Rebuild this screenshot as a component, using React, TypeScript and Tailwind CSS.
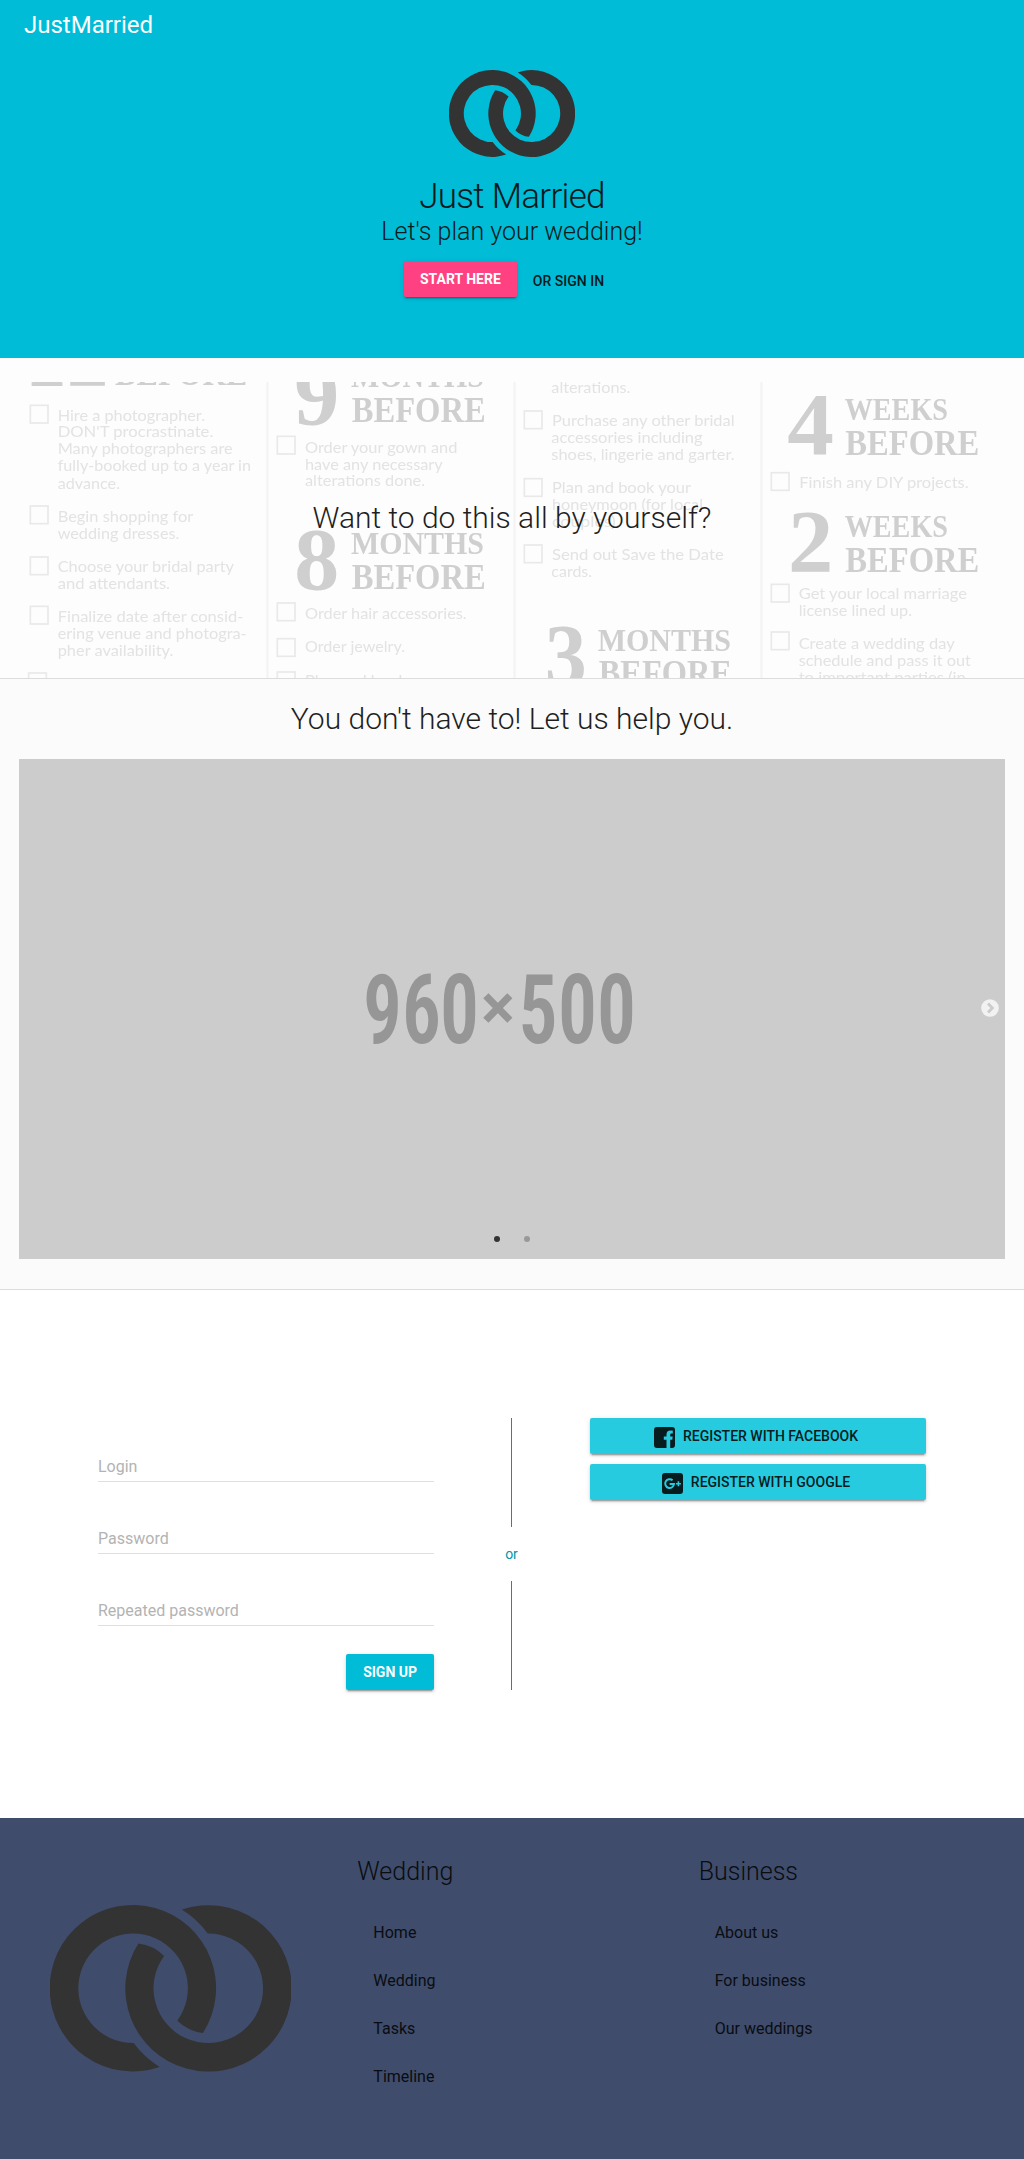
import type { ReactNode } from 'react';

function Rings({ className }: { className: string }) {
  const ring =
    'M109.6 162A83.2 83.2 0 1 1 153 128A45 45 0 0 1 127.3 115.7A54.8 54.8 0 1 0 83.6 138.1A92.6 92.6 0 0 0 109.6 162Z';
  return (
    <svg viewBox="0 0 241.4 166.6" className={className} fill="#333333" aria-hidden="true">
      <path d={ring} />
      <path d={ring} transform="rotate(180 120.7 83.3)" />
    </svg>
  );
}

type Line = [text: string, x: number, end: number, baseline: number];

// Checklist poster, laid out in units of a third of a pixel.
const items: Line[] = [
  ['Hire a photographer.', 173, 615, 212],
  ["DON'T procrastinate.", 173, 640, 262],
  ['Many photographers are', 173, 698, 312],
  ['fully-booked up to a year in', 173, 753, 363],
  ['advance.', 173, 360, 416],
  ['Begin shopping for', 173, 580, 516],
  ['wedding dresses.', 173, 538, 567],
  ['Choose your bridal party', 173, 702, 667],
  ['and attendants.', 173, 510, 717],
  ['Finalize date after consid-', 173, 730, 817],
  ['ering venue and photogra-', 173, 740, 868],
  ['pher availability.', 173, 520, 918],
  ['Begin registering for b', 173, 630, 1016],
  ['Order your gown and', 915, 1372, 308],
  ['have any necessary', 915, 1328, 360],
  ['alterations done.', 915, 1275, 409],
  ['Order hair accessories.', 915, 1400, 807],
  ['Order jewelry.', 915, 1215, 907],
  ['Plan and book your', 915, 1330, 1007],
  ['alterations.', 1654, 1891, 128],
  ['Purchase any other bridal', 1656, 2204, 228],
  ['accessories including', 1654, 2108, 279],
  ['shoes, lingerie and garter.', 1654, 2204, 329],
  ['Plan and book your', 1656, 2073, 430],
  ['honeymoon (for local', 1656, 2109, 480],
  ['couples).', 1656, 1860, 530],
  ['Send out Save the Date', 1656, 2171, 630],
  ['cards.', 1654, 1776, 680],
  ['Finish any DIY projects.', 2398, 2906, 415],
  ['Get your local marriage', 2396, 2901, 747],
  ['license lined up.', 2396, 2736, 797],
  ['Create a wedding day', 2396, 2864, 897],
  ['schedule and pass it out', 2396, 2913, 947],
  ['to important parties (in-', 2396, 2916, 998],
];

const small: Line[] = [
  ['MONTHS', 1053, 1452, 110],
  ['MONTHS', 1053, 1452, 612],
  ['MONTHS', 1793, 2193, 903],
  ['WEEKS', 2534, 2844, 211],
  ['WEEKS', 2534, 2844, 562],
];

const large: Line[] = [
  ['BEFORE', 345, 742, 106],
  ['BEFORE', 1055, 1457, 217],
  ['BEFORE', 1055, 1457, 718],
  ['BEFORE', 1796, 2196, 1005],
  ['BEFORE', 2536, 2938, 314],
  ['BEFORE', 2536, 2938, 665],
];

const digits: Line[] = [
  ['12', 75, 325, 106],
  ['9', 883, 1018, 222],
  ['8', 883, 1018, 716],
  ['3', 1634, 1760, 1004],
  ['4', 2362, 2502, 312],
  ['2', 2364, 2500, 662],
];

const boxes: [number, number][] = [
  [91, 166], [91, 468], [91, 621], [91, 769], [86, 969],
  [832, 259], [832, 759], [832, 866], [832, 966],
  [1573, 183], [1573, 386], [1573, 585],
  [2314, 368], [2314, 703], [2314, 846],
];

function Lines({ lines }: { lines: Line[] }) {
  return (
    <>
      {lines.map(([text, x, end, y]) => (
        <text key={`${text}${x}${y}`} x={x} y={y} textLength={end - x} lengthAdjust="spacingAndGlyphs">
          {text}
        </text>
      ))}
    </>
  );
}

function Checklist() {
  return (
    <svg viewBox="0 96 3072 888" className="absolute inset-x-0 bottom-0 h-[296px] w-full overflow-hidden blur-[0.6px]" aria-hidden="true">
      <g fill="#f4f4f4">
        <rect x="799" y="96" width="7" height="888" />
        <rect x="1540" y="96" width="7" height="888" />
        <rect x="2281" y="96" width="7" height="888" />
      </g>
      <g fill="none" stroke="#e9e9e9" strokeWidth="5">
        {boxes.map(([x, y]) => (
          <rect key={`${x}-${y}`} x={x} y={y} width="53" height="53" />
        ))}
      </g>
      <g className="font-['Lato']" fontSize="46" fill="#e3e3e3">
        <Lines lines={items} />
      </g>
      <g className="font-['Liberation_Serif'] font-bold" fill="#cfcfcf">
        <g fontSize="95"><Lines lines={small} /></g>
        <g fontSize="106"><Lines lines={large} /></g>
        <g fontSize="264"><Lines lines={digits} /></g>
      </g>
    </svg>
  );
}

const placeholder: [string, number, number][] = [
  ['9', -1, 39], ['6', 38, 39], ['0', 76, 39], ['5', 154.5, 39], ['0', 194, 39], ['0', 233, 39],
];

function Slide() {
  return (
    <div className="relative flex h-[500px] items-center justify-center bg-[#cccccc]">
      <svg viewBox="0 0 270 74" className="mr-[27px] h-[74px] w-[270px] overflow-visible" fill="#969696">
        <g className="font-['Roboto'] font-semibold [font-stretch:75%]" fontSize="97">
          {placeholder.map(([ch, x, w]) => (
            <text key={x} x={x} y="71" textLength={w} lengthAdjust="spacingAndGlyphs">
              {ch}
            </text>
          ))}
        </g>
        <text x="134" y="57" textAnchor="middle" className="font-['Roboto'] font-bold" fontSize="63">×</text>
      </svg>
      <svg viewBox="0 0 18 18" className="absolute top-[240px] right-1.5 size-[18px]" aria-label="Next">
        <circle cx="9" cy="9" r="8.8" fill="#f2f2f2" />
        <path d="M7 4.6L11.3 9L7 13.4" fill="none" stroke="#cccccc" strokeWidth="2.9" />
      </svg>
      <div className="absolute inset-x-0 bottom-[17px] flex justify-center gap-6">
        <span className="size-1.5 rounded-full bg-[#333333]" />
        <span className="size-1.5 rounded-full bg-[#999999]" />
      </div>
    </div>
  );
}

function FacebookIcon() {
  return (
    <svg viewBox="0 0 21 21" className="mt-0.5 size-[21px]" fill="#071c1f" aria-hidden="true">
      <path d="M3 0H18A3 3 0 0 1 21 3V18A3 3 0 0 1 18 21H16.2V12.8H18.3L18.7 9.6H16.2V7.9C16.2 6.9 16.6 6.4 17.6 6.4H18.8V3.4H16.4C13.8 3.4 12.5 4.9 12.5 7.4V9.6H9.8V12.8H12.5V21H3A3 3 0 0 1 0 18V3A3 3 0 0 1 3 0Z" />
    </svg>
  );
}

function GoogleIcon() {
  return (
    <svg viewBox="0 0 21 21" className="mt-0.5 size-[21px]" aria-hidden="true">
      <rect width="21" height="21" rx="3" fill="#071c1f" />
      <path d="M10.6 7.3A4.4 4.4 0 1 0 12 11H7.6" fill="none" stroke="#26cbe0" strokeWidth="2" />
      <path d="M16.4 8.2V13.2M13.9 10.7H18.9" fill="none" stroke="#26cbe0" strokeWidth="1.6" />
    </svg>
  );
}

function Field({ label }: { label: string }) {
  return <div className="border-b border-[#dfdfdf] pb-[3px] text-base leading-[23px] text-[#b3b3b3]">{label}</div>;
}

const raised =
  'rounded-[2px] shadow-[0_2px_2px_0_rgba(0,0,0,0.14),0_3px_1px_-2px_rgba(0,0,0,0.2),0_1px_5px_0_rgba(0,0,0,0.12)]';

function SocialButton({ icon, children }: { icon: ReactNode; children: ReactNode }) {
  return (
    <button className={`flex h-9 w-full items-center justify-center gap-2 bg-[#26cbe0] pr-1 text-sm font-medium text-[#071c1f] ${raised}`}>
      {icon}
      {children}
    </button>
  );
}

function FooterColumn({ title, links }: { title: string; links: string[] }) {
  return (
    <div className="px-4 pt-[33px]">
      <h3 className="text-[25px] leading-[41px] font-light">{title}</h3>
      <ul className="mt-[17px] pl-4">
        {links.map((link) => (
          <li key={link} className="text-base leading-[48px]">{link}</li>
        ))}
      </ul>
    </div>
  );
}

export default function App() {
  return (
    <div className="w-full bg-white font-['Roboto',sans-serif] text-[#1f1f1f]">
      <header className="h-[358px] bg-[#00bcd7] text-[#061a1d]">
        <div className="flex h-[50px] items-center px-6 text-2xl text-white">JustMarried</div>
        <div className="flex flex-col items-center pt-5">
          <Rings className="h-[87px] w-[126px]" />
          <h1 className="mt-[19px] text-[35px] leading-[42px] font-light tracking-[-0.02em]">Just Married</h1>
          <p className="-mt-px text-[25px] leading-[30px] font-light">Let's plan your wedding!</p>
          <div className="mt-3.5 flex text-sm">
            <button className={`h-9 bg-[#ff4081] px-4 font-bold text-white ${raised}`}>START HERE</button>
            <button className="h-9 px-4 pt-[3px] font-medium">OR SIGN IN</button>
          </div>
        </div>
      </header>

      <section className="relative flex h-[321px] items-center justify-center border-b border-[#dcdcdc] bg-[#fdfdfd]">
        <Checklist />
        <h2 className="relative text-3xl font-light">Want to do this all by yourself?</h2>
      </section>

      <section className="h-[611px] border-b border-[#dcdcdc] bg-[#fbfbfb] px-[19px]">
        <h2 className="text-center text-[30px] leading-[80px] font-light">You don't have to! Let us help you.</h2>
        <Slide />
      </section>

      <section className="flex h-[528px] justify-between px-[98px] pt-32">
        <form className="flex w-[336px] flex-col gap-[45px] pt-[37px]">
          <Field label="Login" />
          <Field label="Password" />
          <Field label="Repeated password" />
          <button type="button" className={`-mt-[17px] h-9 self-end bg-[#00bcd7] px-[17px] text-sm font-bold text-white ${raised}`}>SIGN UP</button>
        </form>
        <div className="flex h-[272px] w-4 flex-col items-center pr-px text-sm text-[#0097a7]">
          <span className="w-px grow bg-current" />
          <span className="leading-[54px]">or</span>
          <span className="w-px grow bg-current" />
        </div>
        <div className="flex w-[336px] flex-col gap-2.5">
          <SocialButton icon={<FacebookIcon />}>REGISTER WITH FACEBOOK</SocialButton>
          <SocialButton icon={<GoogleIcon />}>REGISTER WITH GOOGLE</SocialButton>
        </div>
      </section>

      <footer className="grid h-[341px] grid-cols-3 bg-[#3f4c6b] text-[#0a0c11]">
        <div className="flex items-center justify-center">
          <Rings className="w-[241.4px]" />
        </div>
        <FooterColumn title="Wedding" links={['Home', 'Wedding', 'Tasks', 'Timeline']} />
        <FooterColumn title="Business" links={['About us', 'For business', 'Our weddings']} />
      </footer>
    </div>
  );
}
